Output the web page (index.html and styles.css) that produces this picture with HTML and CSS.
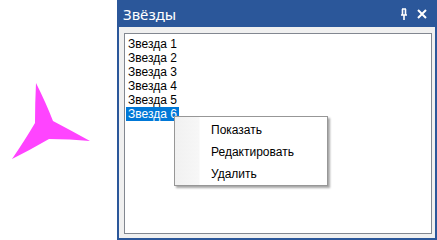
FILE: index.html
```html
<!DOCTYPE html>
<html lang="ru">
<head>
    <meta charset="UTF-8">
    <title>Звёзды</title>
    <link rel="stylesheet" href="styles.css">
</head>
<body>
    <div class="canvas">
        <svg class="star" width="117" height="240" viewBox="0 0 117 240">
            <path d="M36 83 Q46 103 53 121 Q72 131 90 141 Q70 139 49 139 Q30 150 12 159 Q25 140 35 123 Q35 103 36 83 Z" fill="#ff44ff"/>
        </svg>
    </div>

    <div class="window">
        <div class="titlebar">
            <span class="title">Звёзды</span>
            <span class="buttons">
                <svg width="8" height="12" viewBox="0 0 8 12">
                    <path d="M2 1h4M2.5 1v6M5.5 1v6M1 7h6M4 7v5" stroke="#fff" stroke-width="1.6" fill="none"/>
                </svg>
                <svg width="10" height="10" viewBox="0 0 10 10">
                    <path d="M1 1L9 9M9 1L1 9" stroke="#fff" stroke-width="2"/>
                </svg>
            </span>
        </div>
        <div class="panel">
            <ul class="list">
                <li>Звезда 1</li>
                <li>Звезда 2</li>
                <li>Звезда 3</li>
                <li>Звезда 4</li>
                <li>Звезда 5</li>
                <li class="selected">Звезда 6</li>
            </ul>
        </div>
    </div>

    <!-- Context menu over the list -->
    <div class="menu">
        <div class="menu-item">Показать</div>
        <div class="menu-item">Редактировать</div>
        <div class="menu-item">Удалить</div>
    </div>
</body>
</html>
```

FILE: styles.css
```css
* {
    margin: 0;
    padding: 0;
    box-sizing: border-box;
}
body {
    width: 437px;
    height: 240px;
    display: flex;
    background: #fff;
    font-family: 'Liberation Sans', Arial, sans-serif;
    overflow: hidden;
    position: relative;
}
.canvas {
    width: 117px;
    height: 240px;
}
.star {
    display: block;
}
.window {
    width: 320px;
    height: 240px;
    border: 2px solid #2b579a;
    border-top: none;
    display: flex;
    flex-direction: column;
    background: #f0f0f0;
}
.titlebar {
    height: 27px;
    background: #2b579a;
    color: #fff;
    display: flex;
    align-items: center;
    justify-content: space-between;
    padding: 0 8px 0 4px;
}
.title {
    font-family: 'Noto Sans', sans-serif;
    font-size: 15px;
}
.buttons {
    display: flex;
    align-items: center;
    gap: 9px;
}
.buttons svg {
    display: block;
}
.panel {
    flex: 1;
    padding: 6px 3px 4px 5px;
    display: flex;
}
.list {
    flex: 1;
    list-style: none;
    background: #fff;
    border: 1px solid #828790;
    padding: 3px 1px;
    font-size: 12px;
}
.list li {
    height: 14px;
    line-height: 14px;
    padding-left: 2px;
    color: #000;
}
.list li.selected {
    display: inline-block;
    background: #0078d7;
    color: #fff;
    padding-right: 2px;
}
.menu {
    position: absolute;
    left: 174px;
    top: 116px;
    width: 154px;
    height: 70px;
    border: 1px solid #979797;
    background: linear-gradient(to right, #f1f1f1 0, #f7f7f7 24px, #fff 25px);
    box-shadow: 2px 2px 2px rgba(0, 0, 0, 0.35);
    padding: 2px 0;
    font-size: 12px;
}
.menu-item {
    height: 22px;
    line-height: 22px;
    padding-left: 36px;
    color: #000;
}
```
